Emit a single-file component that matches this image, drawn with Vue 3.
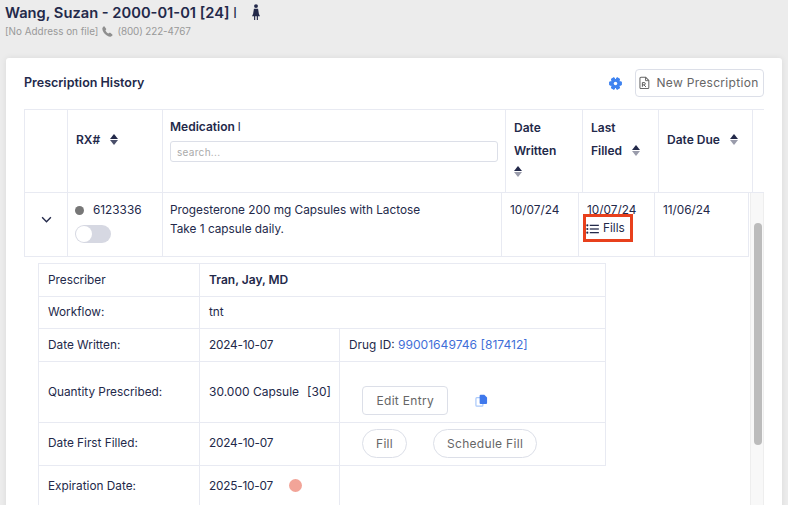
<script setup>
const details = [
  { label: 'Prescriber', value: 'Tran, Jay, MD', strong: true, kind: 'wide', h: 33 },
  { label: 'Workflow:', value: 'tnt', kind: 'wide', h: 32 },
  { label: 'Date Written:', value: '2024-10-07', kind: 'drug', h: 33 },
  { label: 'Quantity Prescribed:', value: '30.000 Capsule', suffix: '[30]', kind: 'edit', h: 61 },
  { label: 'Date First Filled:', value: '2024-10-07', kind: 'fill', h: 43 },
  { label: 'Expiration Date:', value: '2025-10-07', kind: 'exp', h: 41 }
]
const gearTeeth = [0, 60, 120, 180, 240, 300]
</script>

<template>
  <div class="page">
    <header class="patient">
      <h1 class="name">
        <span>Wang, Suzan - 2000-01-01 [24] <span class="bar">l</span></span>
        <svg class="person" viewBox="0 0 12 20" width="10" height="16"><circle cx="6" cy="2.6" r="2.4" fill="#23294a"/><path d="M3.400 6h5.200l1 6.200 1.400 3H8.400V20H7v-4.800H5V20H3.600v-4.800H1l1.400-3z" fill="#23294a"/></svg>
      </h1>
      <div class="contact">
        <span>[No Address on file]</span>
        <svg class="phone" viewBox="0 0 16 16" width="11" height="11"><path d="M3.600.8 6 3.900c.3.400.3.900 0 1.300L5 6.500c.8 1.700 2.300 3.300 4.300 4.400l1.400-1c.4-.3.900-.3 1.300 0l3 2.300c.5.400.5 1 .1 1.500l-1.400 1.300c-.5.400-1.100.6-1.800.5C6.300 14.700 1.400 9.700.5 4.200.4 3.500.6 2.800 1.100 2.300L2.300.8c.4-.4 1-.4 1.300 0z" fill="#8f8f8f"/></svg>
        <span class="tel">(800) 222-4767</span>
      </div>
    </header>

    <main class="card">
      <div class="title-row">
        <h2 class="title">Prescription History</h2>
        <div class="actions">
          <svg class="gear" viewBox="0 0 24 24" width="13" height="13">
            <rect v-for="a in gearTeeth" :key="a" x="8.500" y="0.500" width="7" height="23" rx="1.500" fill="#3f83f0" :transform="`rotate(${a + 30} 12 12)`"/>
            <circle cx="12" cy="12" r="8.500" fill="#3f83f0"/>
            <circle cx="12" cy="12" r="3.200" fill="#fff"/>
          </svg>
          <button class="new-btn">
            <svg viewBox="0 0 14 16" width="11" height="14"><path d="M2.500.8h6l4 4v9a1.300 1.300 0 01-1.300 1.300H2.500A1.300 1.300 0 011.200 13.800V2.100A1.300 1.300 0 012.500.8z" fill="#fff" stroke="#666" stroke-width="1.300"/><path d="M8.300 1v4h4" fill="none" stroke="#666" stroke-width="1.200"/><path d="M4.300 12.800V7.500h2.300a1.400 1.400 0 010 2.900H4.300M6.300 10.400l2.500 2.600" fill="none" stroke="#555" stroke-width="1.200"/></svg>
            New Prescription
          </button>
        </div>
      </div>

      <div class="head">
        <div class="hc"></div>
        <div class="hc center-v"><span>RX#</span><i class="sort dark ml"></i></div>
        <div class="hc med">
          <div class="med-label">Medication <span class="bar">l</span></div>
          <input class="search" placeholder="search..." />
        </div>
        <div class="hc stack"><span>Date</span><span>Written</span><i class="sort"></i></div>
        <div class="hc stack last"><span>Last</span><span>Filled<i class="sort ml"></i></span></div>
        <div class="hc center-v"><span>Date Due</span><i class="sort ml"></i></div>
        <div class="hc end"></div>
      </div>

      <div class="scroll-area">
        <div class="body">
          <div class="row">
            <div class="c chev">
              <svg viewBox="0 0 12 8" width="11" height="7"><path d="M1 1.500l5 5 5-5" fill="none" stroke="#23294a" stroke-width="1.600"/></svg>
            </div>
            <div class="c rx">
              <div class="rx-line"><i class="dot"></i>6123336</div>
              <div class="toggle"><i></i></div>
            </div>
            <div class="c medc">
              <div>Progesterone 200 mg Capsules with Lactose</div>
              <div>Take 1 capsule daily.</div>
            </div>
            <div class="c">10/07/24</div>
            <div class="c filled">
              <div>10/07/24</div>
              <div class="fills">
                <svg viewBox="0 0 14 11" width="13" height="10"><g fill="#23294a"><circle cx="1.300" cy="1.500" r="1.200"/><circle cx="1.300" cy="5.500" r="1.200"/><circle cx="1.300" cy="9.500" r="1.200"/><rect x="4" y="0.800" width="10" height="1.400"/><rect x="4" y="4.800" width="10" height="1.400"/><rect x="4" y="8.800" width="10" height="1.400"/></g></svg>
                Fills
              </div>
            </div>
            <div class="c">11/06/24</div>
          </div>

          <div class="detail">
            <div v-for="d in details" :key="d.label" class="d-row" :class="d.kind" :style="{ height: d.h + 'px' }">
              <div class="d-label">{{ d.label }}</div>
              <div class="d-value" :class="{ strong: d.strong }">
                <span>{{ d.value }}</span>
                <span v-if="d.suffix" class="suffix">{{ d.suffix }}</span>
                <i v-if="d.kind === 'exp'" class="exp-dot"></i>
              </div>
              <div v-if="d.kind === 'drug'" class="d-extra"><span>Drug ID: <a class="link">99001649746 [817412]</a></span></div>
              <div v-else-if="d.kind === 'edit'" class="d-extra edit-cell">
                <button class="btn">Edit Entry</button>
                <svg viewBox="0 0 14 14" width="13" height="13"><rect x="1" y="4" width="7.500" height="9" rx="1" fill="#fff" stroke="#a9c8fa" stroke-width="1.300"/><path d="M5 1.800a1 1 0 011-1h4l3 3v6a1 1 0 01-1 1H6a1 1 0 01-1-1z" fill="#3f78ec"/></svg>
              </div>
              <div v-else-if="d.kind === 'fill'" class="d-extra fill-cell">
                <button class="btn pill">Fill</button>
                <button class="btn pill">Schedule Fill</button>
              </div>
            </div>
          </div>
        </div>
        <div class="scrollbar"><i></i></div>
      </div>
    </main>
  </div>
</template>

<style>
html, body { margin: 0; height: 100%; overflow: hidden; background: #ececec; }
</style>

<style scoped>
.page { width: 788px; height: 505px; overflow: hidden; font-family: Inter, "Liberation Sans", sans-serif; color: #23294a; font-size: 11.800px; background: #ececec; box-sizing: border-box; padding: 0 6px; }
.patient { height: 58px; margin-left: -1px; }
.name { margin: 0; padding-top: 3px; font-size: 14.700px; font-weight: 600; line-height: 21px; display: flex; align-items: center; white-space: pre; }
.bar { font-weight: 400; }
.person { margin-left: 14px; margin-top: -4px; }
.contact { color: #999; font-size: 9.900px; line-height: 14px; display: flex; align-items: center; gap: 4px; }
.tel { letter-spacing: -.1px; }
.card { background: #fff; border-radius: 3px; padding: 0 18px; width: 776px; height: 460px; box-sizing: border-box; box-shadow: 0 0 6px rgba(0,0,0,.08); }
.title-row { height: 51px; display: flex; align-items: center; justify-content: space-between; }
.title { margin: -2px 0 0; font-size: 12.500px; font-weight: 600; }
.actions { display: flex; align-items: center; gap: 13px; margin-top: -1px; }
.new-btn { height: 28px; width: 129px; border: 1px solid #dcdfe8; border-radius: 4px; background: #fff; color: #666; font: 400 12px Inter, sans-serif; display: flex; align-items: center; justify-content: center; gap: 6px; padding: 0 1px 1px 0; white-space: nowrap; letter-spacing: .3px; }
.head { display: grid; grid-template-columns: 43px 95px 343px 77px 76px 94px 12px; height: 84px; border: 1px solid #e8eaf2; border-width: 1px 0 1px 1px; box-sizing: border-box; width: 740px; font-weight: 600; font-size: 12px; }
.hc { border-right: 1px solid #e8eaf2; padding: 0 8px; box-sizing: border-box; }
.hc.end { border-right: 0; }
.center-v { display: flex; align-items: center; padding-bottom: 24px; }
.med { padding: 9px 7px 0; }
.med-label { line-height: 16px; white-space: nowrap; }
.search { display: block; width: 328px; height: 21px; box-sizing: border-box; margin-top: 6px; border: 1px solid #dcdfe8; border-radius: 3px; padding: 0 6px; font: 10px Inter, sans-serif; color: #666; outline: 0; letter-spacing: .3px; }
.search::placeholder { color: #aaa; }
.stack { display: flex; flex-direction: column; align-items: flex-start; padding-top: 6px; line-height: 23px; }
.last span { display: flex; align-items: center; }
.stack > .sort { margin-top: 4px; }
.sort { display: inline-block; width: 9px; height: 11px; flex: none; position: relative; }
.sort::before, .sort::after { content: ""; position: absolute; left: 0; border-left: 4.500px solid transparent; border-right: 4.500px solid transparent; }
.sort::before { top: 0; border-bottom: 5px solid #23294a; }
.sort::after { bottom: 0; border-top: 5px solid #9a9cab; }
.sort.dark::after { border-top-color: #4a4f6a; }
.ml { margin-left: 10px; }
.scroll-area { display: flex; width: 740px; height: 320px; align-items: flex-start; }
.body { width: 726px; }
.row { display: grid; grid-template-columns: 43px 95px 339px 77px 76px 94px; height: 64px; border: 1px solid #e8eaf2; border-width: 0 0 1px 1px; box-sizing: border-box; width: 725px; }
.c { border-right: 1px solid #e8eaf2; padding: 8px 8px 0; box-sizing: border-box; line-height: 19px; }
.rx, .medc { padding-left: 7px; }
.chev { display: flex; justify-content: center; padding: 23px 0 0 1px; line-height: 7px; }
.rx-line { display: flex; align-items: center; gap: 9px; }
.dot { width: 9px; height: 9px; border-radius: 50%; background: #777; }
.toggle { width: 36px; height: 18px; border-radius: 9px; background: #d6d8e2; margin-top: 5px; position: relative; }
.toggle i { position: absolute; left: 1px; top: 1px; width: 16px; height: 16px; border-radius: 50%; background: #fff; }
.fills { display: flex; align-items: center; gap: 4px; position: relative; z-index: 1; width: 50px; height: 28px; margin: -6px 0 0 -4px; outline: 3px solid #e8401c; outline-offset: -3px; padding: 1px 0 0 3px; box-sizing: border-box; }
.detail { margin: 6px 0 0 14px; width: 568px; border-top: 1px solid #e8eaf2; }
.d-row { display: grid; grid-template-columns: 161px 140px 266px; box-sizing: border-box; border-bottom: 1px solid #e8eaf2; border-left: 1px solid #e8eaf2; }
.d-row.wide { grid-template-columns: 161px 1fr; border-right: 1px solid #e8eaf2; }
.d-row.exp { grid-template-columns: 161px 140px; border-bottom: 0; }
.d-label { border-right: 1px solid #e8eaf2; padding: 0 0 1px 9px; display: flex; align-items: center; white-space: nowrap; }
.d-value { padding: 0 0 1px 9px; display: flex; align-items: center; white-space: pre; }
.fill .d-label, .fill .d-value, .exp .d-label, .exp .d-value { padding-bottom: 2px; }
.drug .d-value, .fill .d-value, .exp .d-value { letter-spacing: -.2px; }
.edit .d-value { font-size: 12px; }
.d-row:not(.wide) .d-value { border-right: 1px solid #e8eaf2; }
.strong { font-weight: 600; font-size: 12px; }
.suffix { margin-left: 8px; }
.d-extra { padding: 0 0 1px 9px; display: flex; align-items: center; border-right: 1px solid #e8eaf2; white-space: pre; }
.link { color: #3f6fd8; font-size: 12.100px; }
.edit-cell { padding: 18px 0 1px 22px; gap: 27px; }
.fill-cell { padding: 0 0 2px 22px; gap: 26px; }
.btn { height: 29px; padding: 0 13.500px; border: 1px solid #dcdfe8; border-radius: 4px; background: #fff; color: #666; font: 400 12px Inter, sans-serif; letter-spacing: .3px; }
.pill { border-radius: 15px; padding: 0 13px; }
.exp-dot { width: 13px; height: 13px; border-radius: 50%; background: #f2a498; margin-left: 16px; }
.scrollbar { width: 14px; height: 320px; background: #f8f8f8; border-left: 1px solid #eee; border-right: 1px solid #eee; box-sizing: border-box; padding: 30px 3px 0; }
.scrollbar i { display: block; width: 8px; height: 222px; border-radius: 4px; background: #bcbcbc; }
</style>
